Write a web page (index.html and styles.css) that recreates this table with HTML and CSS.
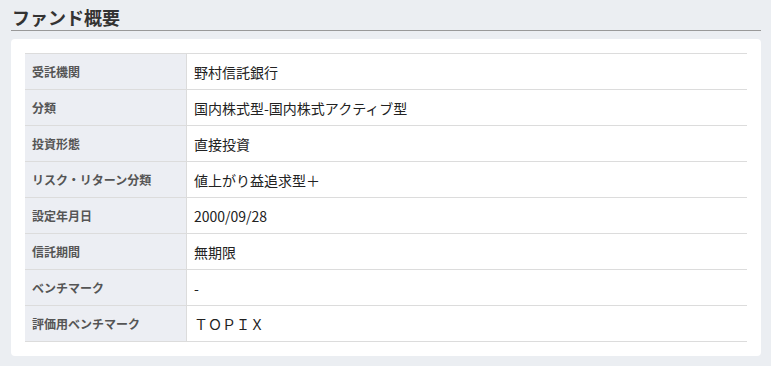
FILE: index.html
```html
<!DOCTYPE html>
<html lang="ja">
<head>
  <meta charset="UTF-8">
  <title>ファンド概要</title>
  <link rel="stylesheet" href="styles.css">
</head>
<body>

  <h2 class="section-title">ファンド概要</h2>

  <div class="card">
    <table class="fund-table">
      <tr><th>受託機関</th><td>野村信託銀行</td></tr>
      <tr><th>分類</th><td>国内株式型-国内株式アクティブ型</td></tr>
      <tr><th>投資形態</th><td>直接投資</td></tr>
      <tr><th>リスク・リターン分類</th><td>値上がり益追求型＋</td></tr>
      <tr><th>設定年月日</th><td>2000/09/28</td></tr>
      <tr><th>信託期間</th><td>無期限</td></tr>
      <tr><th>ベンチマーク</th><td>-</td></tr>
      <tr><th>評価用ベンチマーク</th><td>ＴＯＰＩＸ</td></tr>
    </table>
  </div>

</body>
</html>
```

FILE: styles.css
```css
body {
  margin: 0;
  padding: 6px 10px 0 11px;
  background: #ebeef2;
  font-family: "Noto Sans CJK JP", "Noto Sans", sans-serif;
  color: #222;
}

.section-title {
  margin: 0;
  padding: 0 0 2px 1px;
  font-size: 18px;
  line-height: 22px;
  font-weight: bold;
  color: #333;
  border-bottom: 1px solid #999;
}

.card {
  margin-top: 8px;
  background: white;
  border-radius: 4px;
  padding: 14px 14px 14px;
}

.fund-table {
  width: 100%;
  border-collapse: collapse;
  border-top: 1px solid #dcdcdc;
}

.fund-table th,
.fund-table td {
  height: 35px;
  padding: 0 7px;
  border-bottom: 1px solid #dcdcdc;
  text-align: left;
  vertical-align: middle;
}

.fund-table th {
  width: 147px;
  background: #eceef3;
  border-right: 1px solid #dcdcdc;
  font-size: 12px;
  font-weight: bold;
  color: #555;
}

.fund-table td {
  font-size: 14px;
  color: #222;
}
```
